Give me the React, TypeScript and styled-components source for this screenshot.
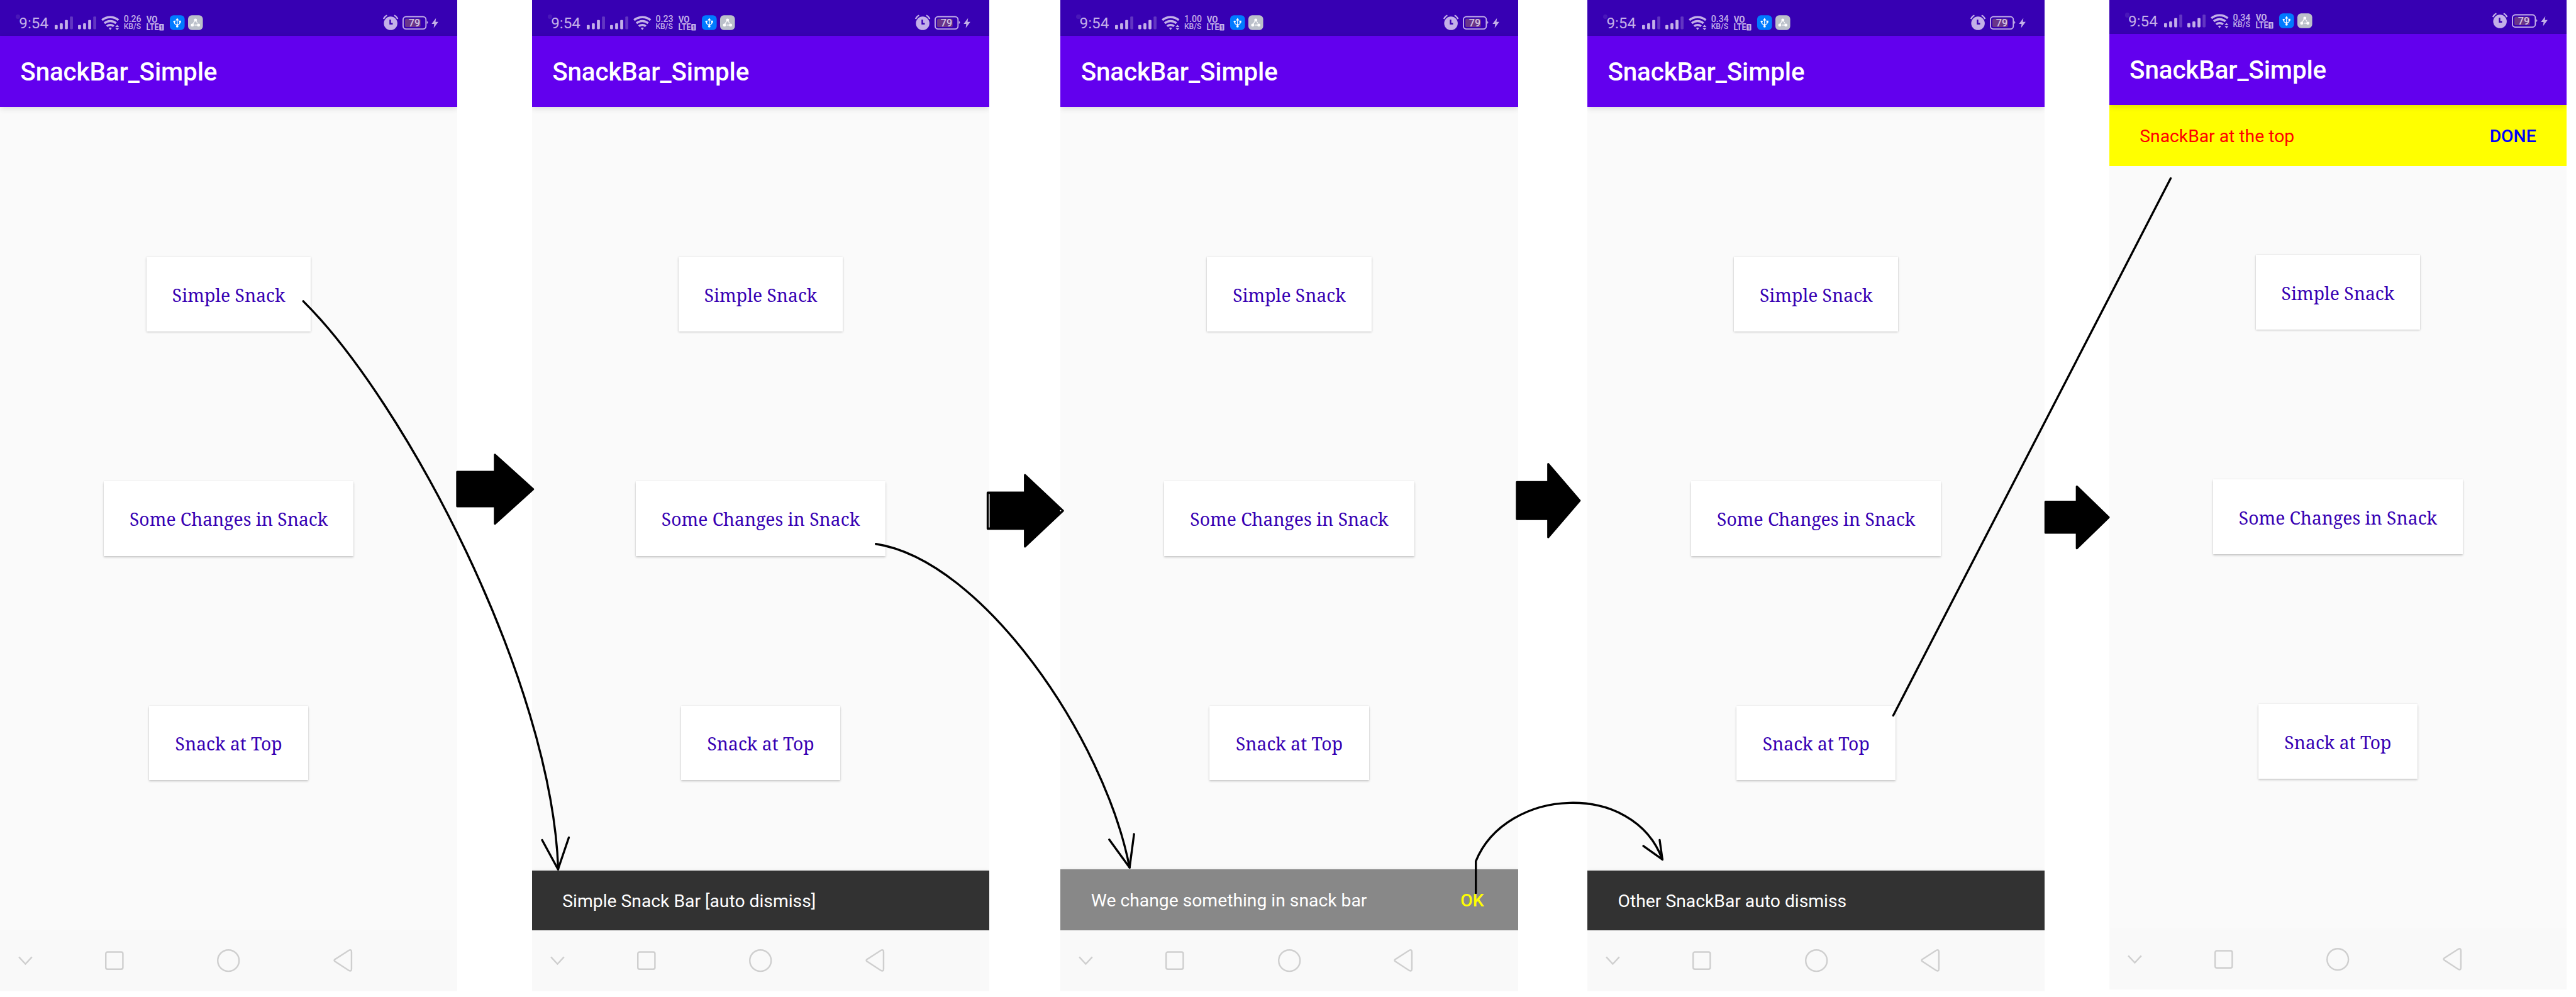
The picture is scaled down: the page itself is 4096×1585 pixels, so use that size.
import React from "react";
import styled, { createGlobalStyle } from "styled-components";

/* Every size below is written in board units; u() turns them into page pixels. */
const BOARD_W = 6082;
const BOARD_H = 2354;
const SCALE = 4096 / BOARD_W;
const u = (n: number) => `${+(n * SCALE).toFixed(3)}px`;

const INK = "#c3b0e8";
const INK_FAINT = "#6236c2";
const NAV_INK = "#cfcfcf";

const GlobalStyle = createGlobalStyle`
  html, body { margin: 0; padding: 0; background: #ffffff; }
  body { overflow: hidden; }
  * { box-sizing: border-box; }
`;

const Board = styled.main`
  position: relative;
  display: flex;
  align-items: flex-start;
  width: ${u(BOARD_W)};
  height: ${u(BOARD_H)};
  overflow: hidden;
  background: #ffffff;
  font-family: Roboto, "Liberation Sans", sans-serif;
`;

const Phone = styled.section<{ $before: number; $lift: number }>`
  flex: none;
  display: flex;
  flex-direction: column;
  width: ${u(1080)};
  height: ${u(2340)};
  margin-left: ${(p) => u(p.$before)};
  margin-top: ${(p) => u(-p.$lift)};
  overflow: hidden;
  background: #fafafa;
`;

/* ---------- status bar ---------- */

const StatusBar = styled.div`
  flex: none;
  display: flex;
  justify-content: space-between;
  height: ${u(84)};
  padding: 0 ${u(43)} 0 ${u(45)};
  background: #3700b3;
  color: ${INK};
`;

const StatusLeft = styled.div`
  display: grid;
  grid-template-columns: ${[84, 110, 53, 54, 55, 43, 36].map(u).join(" ")};
`;

const StatusRight = styled.div`
  display: grid;
  grid-template-columns: ${[46, 69, 18].map(u).join(" ")};
`;

const Time = styled.span`
  position: relative;
  padding-top: ${u(35.7)};
  font-size: ${u(36)};
  line-height: ${u(40)};
  white-space: nowrap;

  &::before {
    content: "";
    position: absolute;
    left: ${u(-8)};
    top: ${u(34)};
    width: ${u(11)};
    height: ${u(11)};
    border-radius: 50%;
    background: rgba(255, 255, 255, 0.09);
  }
`;

const Speed = styled.span`
  display: flex;
  flex-direction: column;
  padding-top: ${u(37.5)};
  font-weight: 500;
  line-height: ${u(16)};
  white-space: nowrap;
`;

const SpeedValue = styled.span`
  font-size: ${u(21)};
`;

const SpeedUnit = styled.span`
  margin-top: ${u(1)};
  font-size: ${u(18)};
`;

const Glyph = styled.svg<{ $w: number; $h: number }>`
  display: block;
  width: ${(p) => u(p.$w)};
  height: ${(p) => u(p.$h)};
  overflow: visible;
`;

const SignalIcon = () => (
  <Glyph $w={98} $h={84} viewBox="129 0 98 84">
    {[129, 184].map((x) => (
      <g key={x} fill={INK}>
        <rect x={x} y="59" width="7" height="10" rx="2" />
        <rect x={x + 12} y="55" width="7" height="14" rx="2" />
        <rect x={x + 24} y="47" width="7" height="22" rx="2" />
        <rect x={x + 36} y="39" width="7" height="30" rx="2" fill={INK_FAINT} />
      </g>
    ))}
  </Glyph>
);

const WifiIcon = ({ traffic }: { traffic: boolean }) => (
  <Glyph $w={43} $h={84} viewBox="239 0 43 84">
    <g fill="none" stroke={INK} strokeWidth="5.2">
      <path d="M240.7 47.4A30.5 30.5 0 0 1 279.7 47.4" />
      <path d="M246.4 54.9A21.5 21.5 0 0 1 274 54.9" />
      <path d="M252.2 62A12.5 12.5 0 0 1 268.4 62" />
    </g>
    <path d="M256.4 66.2q3.8-2.6 7.6 0L260.2 71z" fill={INK} />
    {traffic && (
      <g fill={INK}>
        <path d="M276.6 58.6L281.2 64h-9.2z" />
        <path d="M276.6 71.4L281.2 66h-9.2z" />
      </g>
    )}
  </Glyph>
);

const VolteIcon = () => (
  <Glyph $w={43} $h={84} viewBox="346 0 43 84" fontFamily="Roboto, sans-serif" fontWeight="700">
    <text x="345.6" y="53.2" fontSize="21" textLength="26.5" lengthAdjust="spacingAndGlyphs" fill={INK}>
      VO
    </text>
    <text x="345.2" y="71.8" fontSize="21.5" textLength="30" lengthAdjust="spacingAndGlyphs" fill={INK}>
      LTE
    </text>
    <rect x="376" y="56.4" width="11" height="15.6" rx="1.5" fill={INK} />
    <text x="377.8" y="69.4" fontSize="14.5" textLength="7" lengthAdjust="spacingAndGlyphs" fill="#3700b3">
      1
    </text>
  </Glyph>
);

const UsbBadge = () => (
  <Glyph $w={35} $h={84} viewBox="401 0 35 84">
    <rect x="401" y="36" width="35" height="35" rx="9" fill="#007bff" />
    <g fill="#ffffff">
      <path d="M418.5 42.5L422.6 48.4H414.4z" />
      <circle cx="418.5" cy="62" r="2.9" />
      <circle cx="411.8" cy="51" r="2.5" />
      <rect x="422.8" y="48.7" width="4.6" height="4.6" />
    </g>
    <path
      d="M418.5 47V61M411.8 51V52.6Q411.8 57.6 418.5 58Q425.1 57.6 425.1 52.6V51"
      fill="none"
      stroke="#ffffff"
      strokeWidth="1.9"
    />
  </Glyph>
);

const ShareBadge = () => (
  <Glyph $w={35} $h={84} viewBox="444 0 35 84">
    <rect x="444" y="36" width="35" height="35" rx="9" fill="#bbc0ca" />
    <g fill="#ffffff">
      <circle cx="461.5" cy="47.3" r="3.6" />
      <circle cx="454.2" cy="59.3" r="3.6" />
      <circle cx="468.8" cy="59.3" r="3.6" />
    </g>
    <path d="M459.8 49.5L455.2 57M463.4 50.5L466.6 55.4M459.4 59.3H467" stroke="#ffffff" strokeWidth="1.7" />
  </Glyph>
);

const AlarmIcon = () => (
  <Glyph $w={36} $h={84} viewBox="905 0 36 84">
    <circle cx="923" cy="55" r="16" fill={INK} />
    <path d="M906.4 44.6Q908.6 38.8 914.6 36.2M939.6 44.6Q937.4 38.8 931.4 36.2" fill="none" stroke={INK} strokeWidth="3.2" />
    <path d="M922 46.4V56H928" fill="none" stroke="#3700b3" strokeWidth="3.6" />
  </Glyph>
);

const BatteryIcon = () => (
  <Glyph $w={60} $h={84} viewBox="950 0 60 84" fontFamily="Roboto, sans-serif" fontWeight="500">
    <rect x="951.4" y="39.3" width="54" height="29.2" rx="7" fill="none" stroke={INK} strokeWidth="2.8" />
    <path d="M1007.4 50.2q2.6 0 2.6 3t-2.6 3z" fill={INK} />
    <rect x="956" y="44" width="36.6" height="20" rx="4" fill="#6a3589" />
    <text x="964.6" y="62.8" fontSize="24" textLength="27.4" lengthAdjust="spacingAndGlyphs" fill="#d3c3e3">
      79
    </text>
  </Glyph>
);

const BoltIcon = () => (
  <Glyph $w={17} $h={84} viewBox="1019 0 17 84">
    <path d="M1029.8 42.6L1019.4 56.4H1025.6L1024.4 66.2L1035.2 51.8H1028.6z" fill={INK} />
  </Glyph>
);

/* ---------- app content ---------- */

const AppBar = styled.header`
  position: relative;
  z-index: 1;
  flex: none;
  display: flex;
  align-items: center;
  height: ${u(168)};
  padding: ${u(6)} ${u(48)} 0;
  background: #6200ee;
  color: #ffffff;
  font-size: ${u(60)};
  font-weight: 500;
  line-height: 1;
  letter-spacing: ${u(-0.2)};
  white-space: nowrap;
  box-shadow: 0 ${u(5)} ${u(14)} rgba(0, 0, 0, 0.14);
`;

const Screen = styled.div`
  flex: none;
  display: grid;
  height: ${u(1944)};
`;

const ButtonStack = styled.div`
  grid-area: 1 / 1;
  display: flex;
  flex-direction: column;
  align-items: center;
  justify-content: space-evenly;
`;

const RaisedButton = styled.button<{ $width: number; $depth: number }>`
  width: ${(p) => u(p.$width)};
  height: ${u(176)};
  padding: ${u(4)} 0 0;
  border: 0;
  background: #ffffff;
  color: #3700b3;
  font-family: "Noto Serif", "DejaVu Serif Condensed", "DejaVu Serif", serif;
  font-size: ${u(42)};
  line-height: 1;
  white-space: nowrap;
  box-shadow: 0 ${(p) => u(p.$depth)} ${u(5)} rgba(0, 0, 0, 0.18), 0 0 ${u(3)} rgba(0, 0, 0, 0.12);
`;

type Place = "top" | "bottom";

const Snack = styled.div<{ $place: Place; $height: number; $bg: string; $fg: string }>`
  grid-area: 1 / 1;
  align-self: ${(p) => (p.$place === "top" ? "start" : "end")};
  display: flex;
  align-items: center;
  justify-content: space-between;
  height: ${(p) => u(p.$height)};
  padding: ${u(4)} ${u(36)} 0 ${u(72)};
  background: ${(p) => p.$bg};
  color: ${(p) => p.$fg};
  font-size: ${u(42)};
  line-height: 1;
  white-space: nowrap;
  box-shadow: ${(p) => (p.$place === "top" ? "none" : `0 0 ${u(8)} rgba(0, 0, 0, 0.08)`)};
`;

const SnackAction = styled.span<{ $color: string }>`
  min-width: ${u(144)};
  padding: 0 ${u(36)};
  color: ${(p) => p.$color};
  font-weight: 500;
  text-align: center;
`;

/* ---------- navigation bar ---------- */

const NavBar = styled.nav`
  flex: none;
  display: grid;
  grid-template-columns: ${[205, 265, 274, 60].map(u).join(" ")};
  align-items: center;
  height: ${u(144)};
  padding-left: ${u(43)};
  background: #f9f9f9;
`;

const navStroke = { fill: "none", stroke: NAV_INK, strokeWidth: 3.6 } as const;

const NavIcons = () => (
  <NavBar>
    <Glyph $w={34} $h={54} viewBox="0 0 34 54">
      <path d="M1.6 18.4L17 35L32.4 18.4" {...navStroke} />
    </Glyph>
    <Glyph $w={44} $h={54} viewBox="0 0 44 54">
      <rect x="1.8" y="6.8" width="40.4" height="40.4" rx="4" {...navStroke} />
    </Glyph>
    <Glyph $w={54} $h={54} viewBox="0 0 54 54">
      <circle cx="27" cy="27" r="25.2" {...navStroke} />
    </Glyph>
    <Glyph $w={46} $h={54} viewBox="0 0 46 54">
      <path
        d="M3.6 24.2L37 2.6Q43 0 43 6.6V46.4Q43 53 37 50.4L3.6 28.8Q0.8 26.5 3.6 24.2z"
        {...navStroke}
      />
    </Glyph>
  </NavBar>
);

/* ---------- annotations drawn over the phones ---------- */

const Overlay = styled.svg`
  position: absolute;
  inset: 0;
  width: 100%;
  height: 100%;
  pointer-events: none;
`;

const strokes = [
  "M716 711C955 948 1302 1603 1318 2052",
  "M1280 1983L1317.5 2052L1343 1977",
  "M2068 1284C2318 1322 2607 1740 2667 2048",
  "M2619 1982L2667 2048L2677.5 1969",
  "M3484.5 2108V2033C3556 1858 3856 1842 3925 2029",
  "M3880 1997L3925 2029L3918.5 1983",
  "M4470 1689L5125 421",
];

type Block = { left: number; top: number; bottom: number; neck: number; high: number; low: number; tip: number };

const blocks: Block[] = [
  { left: 1079.5, top: 1114, bottom: 1195, neck: 1168.5, high: 1073.5, low: 1236, tip: 1258.5 },
  { left: 2332, top: 1163, bottom: 1248, neck: 2420, high: 1121.5, low: 1290, tip: 2509.5 },
  { left: 3581.5, top: 1138, bottom: 1225, neck: 3655.5, high: 1095.5, low: 1268, tip: 3729.5 },
  { left: 4829.5, top: 1184.5, bottom: 1257.5, neck: 4903.5, high: 1148.5, low: 1294, tip: 4978.5 },
];

const blockPath = (b: Block) =>
  `M${b.left} ${b.top}H${b.neck}V${b.high}L${b.tip} ${(b.high + b.low) / 2}L${b.neck} ${b.low}V${b.bottom}H${b.left}z`;

const Annotations = () => (
  <Overlay viewBox={`0 0 ${BOARD_W} ${BOARD_H}`} preserveAspectRatio="none">
    <g stroke="#000000" strokeWidth="5" strokeLinecap="round" strokeLinejoin="round">
      {blocks.map((b) => (
        <path key={b.left} d={blockPath(b)} fill="#000000" />
      ))}
      <g fill="none">
        {strokes.map((d) => (
          <path key={d} d={d} />
        ))}
      </g>
    </g>
    <path d="M2335.6 1166V1245" stroke="#ffffff" strokeWidth="2" />
    <circle cx="2504" cy="1205.5" r="1.6" fill="#ffffff" />
  </Overlay>
);

/* ---------- data ---------- */

type SnackInfo = {
  text: string;
  place: Place;
  height: number;
  bg: string;
  fg: string;
  action?: { label: string; color: string };
};

type PhoneInfo = { before: number; lift: number; speed: string; traffic: boolean; snack?: SnackInfo };

const phones: PhoneInfo[] = [
  { before: 0, lift: 0, speed: "0.26", traffic: true },
  {
    before: 176,
    lift: 0,
    speed: "0.23",
    traffic: false,
    snack: { text: "Simple Snack Bar [auto dismiss]", place: "bottom", height: 141, bg: "#323232", fg: "#ffffff" },
  },
  {
    before: 168,
    lift: 0,
    speed: "1.00",
    traffic: true,
    snack: {
      text: "We change something in snack bar",
      place: "bottom",
      height: 144,
      bg: "#888888",
      fg: "#ffffff",
      action: { label: "OK", color: "#ffff00" },
    },
  },
  {
    before: 164,
    lift: 0,
    speed: "0.34",
    traffic: true,
    snack: { text: "Other SnackBar auto dismiss", place: "bottom", height: 141, bg: "#323232", fg: "#ffffff" },
  },
  {
    before: 152,
    lift: 4,
    speed: "0.34",
    traffic: true,
    snack: {
      text: "SnackBar at the top",
      place: "top",
      height: 144,
      bg: "#ffff00",
      fg: "#ff0000",
      action: { label: "DONE", color: "#0000ff" },
    },
  },
];

const buttons = [
  { label: "Simple Snack", width: 388, depth: 3 },
  { label: "Some Changes in Snack", width: 590, depth: 4 },
  { label: "Snack at Top", width: 376, depth: 5 },
];

const PhoneView = ({ before, lift, speed, traffic, snack }: PhoneInfo) => (
  <Phone $before={before} $lift={lift}>
    <StatusBar>
      <StatusLeft>
        <Time>9:54</Time>
        <SignalIcon />
        <WifiIcon traffic={traffic} />
        <Speed>
          <SpeedValue>{speed}</SpeedValue>
          <SpeedUnit>KB/S</SpeedUnit>
        </Speed>
        <VolteIcon />
        <UsbBadge />
        <ShareBadge />
      </StatusLeft>
      <StatusRight>
        <AlarmIcon />
        <BatteryIcon />
        <BoltIcon />
      </StatusRight>
    </StatusBar>
    <AppBar>SnackBar_Simple</AppBar>
    <Screen>
      <ButtonStack>
        {buttons.map((b) => (
          <RaisedButton key={b.label} $width={b.width} $depth={b.depth}>
            {b.label}
          </RaisedButton>
        ))}
      </ButtonStack>
      {snack && (
        <Snack $place={snack.place} $height={snack.height} $bg={snack.bg} $fg={snack.fg}>
          <span>{snack.text}</span>
          {snack.action && <SnackAction $color={snack.action.color}>{snack.action.label}</SnackAction>}
        </Snack>
      )}
    </Screen>
    <NavIcons />
  </Phone>
);

export default function App() {
  return (
    <>
      <GlobalStyle />
      <Board>
        {phones.map((p, i) => (
          <PhoneView key={i} {...p} />
        ))}
        <Annotations />
      </Board>
    </>
  );
}
